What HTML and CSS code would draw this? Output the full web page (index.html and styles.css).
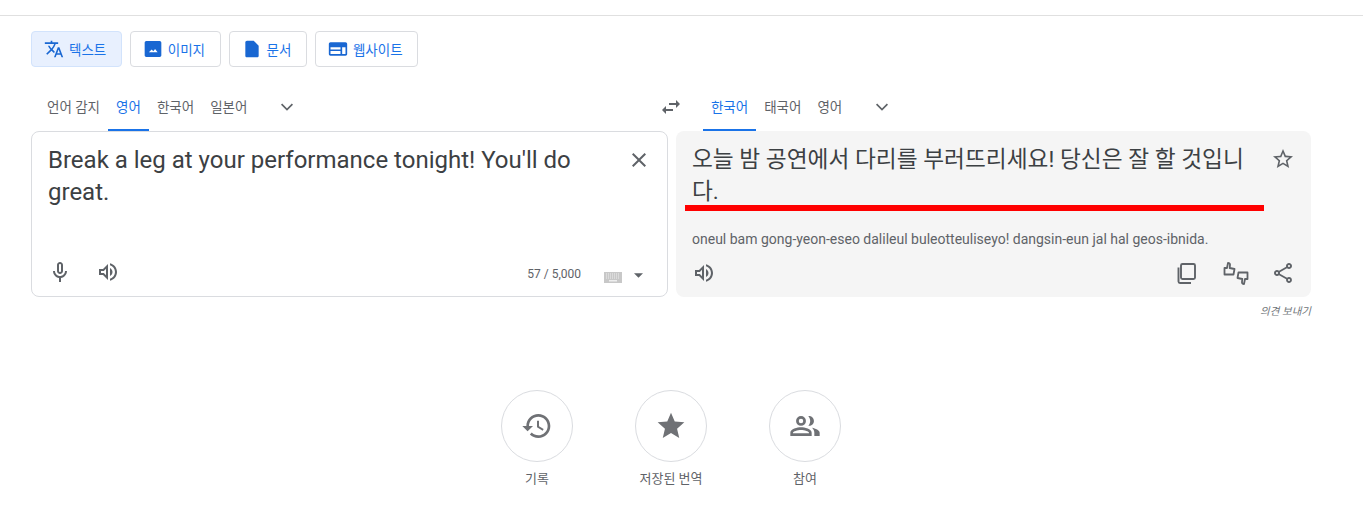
FILE: index.html
```html
<!DOCTYPE html>
<html lang="ko">
<head>
    <meta charset="UTF-8">
    <meta name="viewport" content="width=device-width, initial-scale=1.0">
    <title>번역</title>
    <link rel="stylesheet" href="styles.css">
</head>
<body>
    <div class="topbar"></div>
    <main class="page">
        <nav class="types">
            <button class="type active">
                <svg class="ic20" viewBox="0 0 24 24"><path d="M12.87 15.07l-2.54-2.51.03-.03c1.74-1.94 2.98-4.17 3.71-6.53H17V4h-7V2H8v2H1v1.99h11.17C11.5 7.92 10.4 9.75 9 11.3 8.07 10.28 7.3 9.17 6.69 8h-2c.73 1.63 1.73 3.17 2.98 4.56l-5.09 5.02L4 19l5-5 3.11 3.11.76-2.04zM18.5 10h-2L12 22h2l1.12-3h4.75L21 22h2l-4.5-12zm-2.62 7l1.62-4.33L19.12 17h-3.24z"/></svg>
                텍스트
            </button>
            <button class="type">
                <svg class="ic20" viewBox="0 0 24 24"><path fill-rule="evenodd" d="M4 2.500h16c1.100 0 2 .9 2 2v15c0 1.100-.9 2-2 2H4c-1.100 0-2-.9-2-2v-15c0-1.100.9-2 2-2zm3 13.500h10.500l-3-4-2.200 2.600-1.800-2z"/></svg>
                이미지
            </button>
            <button class="type">
                <svg class="ic20" viewBox="0 0 24 24"><path d="M14 2H6c-1.100 0-2 .9-2 2v16c0 1.100.9 2 2 2h12c1.100 0 2-.9 2-2V8l-6-6z"/></svg>
                문서
            </button>
            <button class="type">
                <svg class="ic20" viewBox="0 0 24 24"><path fill-rule="evenodd" d="M3 4h18c1.100 0 2 .9 2 2v12c0 1.100-.9 2-2 2H3c-1.100 0-2-.9-2-2V6c0-1.100.9-2 2-2zm0 6v2.500h12V10zm0 4.500V18h12v-3.500zM17 10v8h4v-8z"/></svg>
                웹사이트
            </button>
        </nav>

        <div class="langs">
            <div class="tabs">
                <span class="tab">언어 감지</span>
                <span class="tab on">영어</span>
                <span class="tab">한국어</span>
                <span class="tab">일본어</span>
            </div>
            <svg class="chev left" viewBox="0 0 24 24"><path d="M5.500 8.500l6.500 6.500 6.500-6.500"/></svg>
            <svg class="ic24 swap" viewBox="0 0 24 24"><path d="M6.990 11L3 15l3.990 4v-3H14v-2H6.990v-3zM21 9l-3.990-4v3H10v2h7.010v3L21 9z"/></svg>
            <div class="tabs">
                <span class="tab on">한국어</span>
                <span class="tab">태국어</span>
                <span class="tab">영어</span>
            </div>
            <svg class="chev right" viewBox="0 0 24 24"><path d="M5.500 8.500l6.500 6.500 6.500-6.500"/></svg>
        </div>

        <div class="panels">
            <section class="panel source">
                <div class="body">
                    <p class="text">Break a leg at your performance tonight! You'll do great.</p>
                    <svg class="ic24 close" viewBox="0 0 24 24"><path d="M19 6.410L17.590 5 12 10.590 6.410 5 5 6.410 10.590 12 5 17.590 6.410 19 12 13.410 17.590 19 19 17.590 13.410 12z"/></svg>
                </div>
                <div class="tools">
                    <svg class="ic24" viewBox="0 0 24 24"><path d="M12 14c1.660 0 3-1.340 3-3V5c0-1.660-1.340-3-3-3S9 3.340 9 5v6c0 1.660 1.340 3 3 3zm-1-9c0-.55.45-1 1-1s1 .45 1 1v6c0 .55-.45 1-1 1s-1-.45-1-1V5zM17 11c0 2.760-2.240 5-5 5s-5-2.240-5-5H5c0 3.530 2.610 6.430 6 6.920V22h2v-4.080c3.390-.49 6-3.390 6-6.920h-2z"/></svg>
                    <svg class="ic24 speak" viewBox="0 0 24 24"><path d="M3 9v6h4l5 5V4L7 9H3zm7-.17v6.340L7.830 13H5v-2h2.830L10 8.830zM16.500 12c0-1.770-1.020-3.290-2.500-4.030v8.050c1.480-.73 2.500-2.250 2.500-4.020zM14 3.230v2.060c2.890.86 5 3.540 5 6.710s-2.110 5.850-5 6.710v2.060c4.010-.91 7-4.490 7-8.770s-2.990-7.860-7-8.770z"/></svg>
                    <span class="count">57 / 5,000</span>
                    <svg class="keys" viewBox="0 0 18 11"><rect width="18" height="11" fill="#c8c8c8"/><path d="M2 2h14M2 4h14M2 6h14" stroke="#eee" stroke-dasharray="1 1"/><rect x="5" y="8" width="8" height="1.500" fill="#eee"/></svg>
                    <svg class="caret" viewBox="0 0 10 5"><path d="M0 0h10L5 5z"/></svg>
                </div>
            </section>

            <section class="panel result">
                <div class="body">
                    <p class="text">오늘 밤 공연에서 다리를 부러뜨리세요! 당신은 잘 할 것입니다.</p>
                    <svg class="ic24 fav" viewBox="0 0 24 24"><path d="M22 9.240l-7.190-.62L12 2 9.190 8.630 2 9.240l5.460 4.730L5.820 21 12 17.270 18.180 21l-1.630-7.030L22 9.240zM12 15.400l-3.760 2.270 1-4.280-3.320-2.880 4.380-.38L12 6.100l1.710 4.040 4.380.38-3.320 2.880 1 4.280L12 15.400z"/></svg>
                </div>
                <p class="roman">oneul bam gong-yeon-eseo dalileul buleotteuliseyo! dangsin-eun jal hal geos-ibnida.</p>
                <div class="tools">
                    <svg class="ic24" viewBox="0 0 24 24"><path d="M3 9v6h4l5 5V4L7 9H3zm7-.17v6.340L7.830 13H5v-2h2.830L10 8.830zM16.500 12c0-1.770-1.020-3.290-2.500-4.030v8.050c1.480-.73 2.500-2.250 2.500-4.020zM14 3.230v2.060c2.890.86 5 3.540 5 6.710s-2.110 5.850-5 6.710v2.060c4.010-.91 7-4.490 7-8.770s-2.990-7.860-7-8.770z"/></svg>
                    <svg class="copy" viewBox="0 0 24 24"><rect x="6" y="3" width="14" height="15" rx="1.500"/><path d="M3.500 6.500v14c0 .8.700 1.500 1.500 1.500h11"/></svg>
                    <svg class="rate" viewBox="0 0 26 23"><path d="M1.500 6h2.500L5 1c1.500 0 2.200 1 2 2l-.3 3 4.800 1-1 5.500H1.500z"/><path d="M24.500 17h-2.500L21 22c-1.500 0-2.200-1-2-2l.3-3-4.800-1 1-5.500h9z"/></svg>
                    <svg class="ic24" viewBox="0 0 24 24"><path d="M18 16.080c-.76 0-1.440.3-1.960.77L8.910 12.700c.05-.23.09-.46.09-.7s-.04-.47-.09-.7l7.050-4.110c.54.5 1.250.81 2.040.81 1.660 0 3-1.340 3-3s-1.340-3-3-3-3 1.340-3 3c0 .24.04.47.09.7L8.040 9.810C7.500 9.310 6.790 9 6 9c-1.660 0-3 1.340-3 3s1.340 3 3 3c.79 0 1.500-.31 2.040-.81l7.120 4.160c-.05.21-.08.43-.08.65 0 1.610 1.310 2.920 2.920 2.920s2.920-1.310 2.920-2.920-1.310-2.920-2.920-2.920zM18 4c.55 0 1 .45 1 1s-.45 1-1 1-1-.45-1-1 .45-1 1-1zM6 13c-.55 0-1-.45-1-1s.45-1 1-1 1 .45 1 1-.45 1-1 1zm12 7.020c-.55 0-1-.45-1-1s.45-1 1-1 1 .45 1 1-.45 1-1 1z"/></svg>
                </div>
                <div class="redline"></div>
            </section>
        </div>

        <p class="feedback">의견 보내기</p>

        <div class="actions">
            <div class="action">
                <span class="circle"><svg viewBox="0 0 24 24"><path d="M13 3c-4.970 0-9 4.030-9 9H1l3.890 3.890.07.14L9 12H6c0-3.870 3.130-7 7-7s7 3.130 7 7-3.130 7-7 7c-1.930 0-3.680-.79-4.940-2.060l-1.420 1.420C8.270 19.990 10.510 21 13 21c4.970 0 9-4.030 9-9s-4.030-9-9-9zm-1 5v5l4.280 2.540.72-1.210-3.500-2.080V8H12z"/></svg></span>
                <span class="label">기록</span>
            </div>
            <div class="action">
                <span class="circle"><svg viewBox="0 0 24 24"><path d="M12 17.270L18.180 21l-1.640-7.030L22 9.240l-7.190-.61L12 2 9.190 8.630 2 9.240l5.460 4.730L5.820 21z"/></svg></span>
                <span class="label">저장된 번역</span>
            </div>
            <div class="action">
                <span class="circle"><svg viewBox="0 0 24 24"><path fill-rule="evenodd" d="M9 4.500a3.700 3.700 0 1 1 0 7.400 3.700 3.700 0 0 1 0-7.400zm0 2a1.700 1.700 0 1 0 0 3.400 1.700 1.700 0 0 0 0-3.400zM9 13c2.700 0 8 1.300 8 4v2.500H1V17c0-2.700 5.300-4 8-4zm0 2c-2.600 0-6 1.100-6 2v.5h12V17c0-.9-3.400-2-6-2z"/><path d="M14.500 4.600c2.200-.4 4.200 1.400 4.200 3.600s-2 4-4.200 3.600c.9-1 1.400-2.300 1.400-3.600s-.5-2.600-1.400-3.600zM17.200 13.300c2.600.5 5.800 1.700 5.800 3.700v2.500h-4V17c0-1.500-.7-2.700-1.800-3.700z"/></svg></span>
                <span class="label">참여</span>
            </div>
        </div>
    </main>
</body>
</html>
```

FILE: styles.css
```css
*{
    padding: 0;
    margin: 0;
    box-sizing: border-box;
}
html{
    background-color: #fff;
}
body{
    font-family: Roboto, "Noto Sans CJK KR", sans-serif;
    color: #3c4043;
}
svg{
    display: block;
    flex: none;
    fill: #5f6368;
}
.ic20{
    width: 20px;
    height: 20px;
}
.ic24{
    width: 24px;
    height: 24px;
}
.topbar{
    height: 16px;
    border-bottom: 1px solid #e0e0e0;
}
.page{
    width: 1280px;
    margin-left: 31px;
}

.types{
    display: flex;
    gap: 8px;
    padding-top: 15px;
}
.type{
    display: flex;
    align-items: center;
    gap: 5px;
    height: 36px;
    padding: 0 14.5px 0 12px;
    border: 1px solid #dadce0;
    border-radius: 4px;
    background-color: #fff;
    color: #1a73e8;
    font: 13.5px Roboto, "Noto Sans CJK KR", sans-serif;
}
.type svg{
    fill: #1967d2;
}
.type.active{
    background-color: #e8f0fe;
    border-color: #d2e3fc;
}

.langs{
    display: flex;
    align-items: flex-end;
    height: 64px;
}
.tabs{
    display: flex;
    padding-left: 8px;
}
.tab{
    height: 46px;
    padding: 0 8px;
    line-height: 44px;
    font-size: 13.5px;
    color: #5f6368;
    border-bottom: 2px solid transparent;
}
.tab.on{
    color: #1a73e8;
    border-bottom-color: #1a73e8;
}
.chev{
    width: 20px;
    height: 20px;
    margin-bottom: 14px;
    fill: none;
    stroke: #5f6368;
    stroke-width: 2;
}
.chev.left{
    margin-left: 22px;
}
.swap{
    margin: 0 11.5px 12px 362px;
}
.chev.right{
    margin-left: 21.5px;
}

.panels{
    display: grid;
    grid-template-columns: 637px 635px;
    gap: 8px;
}
.panel{
    position: relative;
    display: flex;
    flex-direction: column;
    height: 166px;
    border-radius: 8px;
}
.source{
    border: 1px solid #dadce0;
}
.result{
    background-color: #f5f5f5;
}
.body{
    display: flex;
    justify-content: space-between;
    gap: 16px;
    padding: 12px 16px 0;
}
.text{
    font-size: 24px;
    line-height: 32px;
    color: #3c4043;
}
.result .text{
    padding-top: 1px;
    font-size: 22.7px;
}
.close{
    margin-top: 4px;
}
.fav{
    margin-top: 4px;
}
.redline{
    position: absolute;
    left: 9px;
    top: 74px;
    width: 579px;
    height: 6px;
    background-color: #f00;
}
.roman{
    margin-top: 21px;
    padding-left: 16px;
    font-size: 14px;
    line-height: 20px;
    color: #5f6368;
}
.tools{
    display: flex;
    align-items: center;
    margin-top: auto;
    padding: 0 16px 12px;
}
.source .tools{
    padding-right: 24px;
}
.speak{
    margin-left: 24px;
}
.count{
    margin: 4px 23px 0 auto;
    font-size: 12px;
    color: #5f6368;
}
.keys{
    width: 18px;
    height: 11px;
    margin-top: 11px;
}
.caret{
    width: 9px;
    height: 5px;
    margin: 6px 0 0 12px;
}
.copy{
    width: 24px;
    height: 24px;
    margin-left: auto;
    fill: none;
    stroke: #5f6368;
    stroke-width: 1.9;
}
.rate{
    width: 26px;
    height: 23px;
    margin: 0 22.5px 0 23.5px;
    fill: none;
    stroke: #5f6368;
    stroke-width: 1.8;
    stroke-linejoin: round;
}

.feedback{
    padding-top: 8px;
    text-align: right;
    font-size: 10.5px;
    font-style: italic;
    line-height: 14px;
    color: #70757a;
}

.actions{
    display: flex;
    justify-content: center;
    gap: 62px;
    margin-top: 71px;
}
.action{
    display: flex;
    flex-direction: column;
    align-items: center;
    width: 72px;
}
.circle{
    display: flex;
    align-items: center;
    justify-content: center;
    width: 72px;
    height: 72px;
    border: 1px solid #dadce0;
    border-radius: 50%;
}
.circle svg{
    width: 32px;
    height: 32px;
    fill: #6f7175;
}
.label{
    margin-top: 7px;
    font-size: 13px;
    line-height: 20px;
    color: #5f6368;
    white-space: nowrap;
}
```
